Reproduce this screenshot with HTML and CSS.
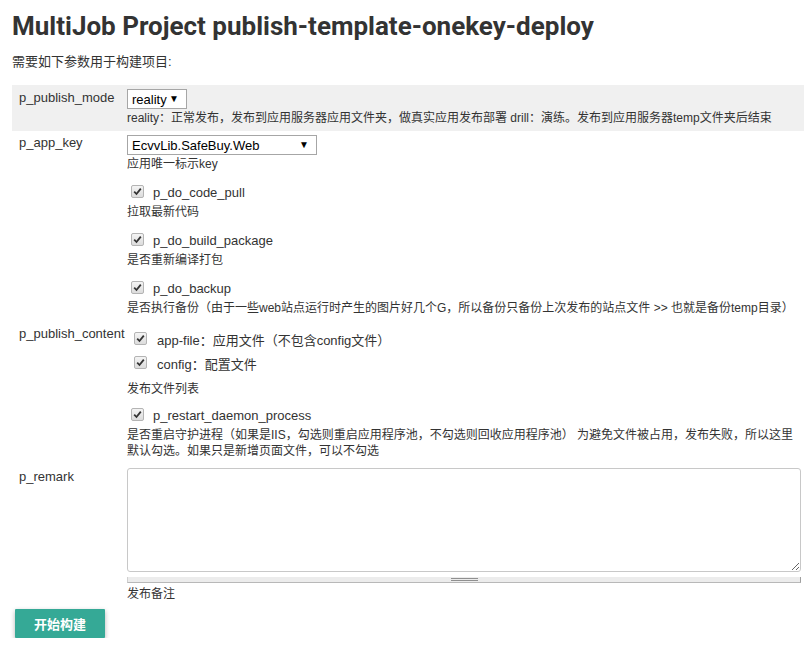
FILE: index.html
```html
<!DOCTYPE html>
<html lang="zh-CN">
<head>
    <meta charset="UTF-8">
    <meta name="viewport" content="width=device-width, initial-scale=1.0">
    <title>MultiJob Project publish-template-onekey-deploy</title>
    <link rel="stylesheet" href="styles.css">
</head>
<body>
    <div class="page">
        <!-- Header -->
        <h1 class="job-title">MultiJob Project publish-template-onekey-deploy</h1>
        <p class="intro">需要如下参数用于构建项目:</p>

        <!-- Build Parameters -->
        <table class="params">
            <tr class="row-shaded">
                <td class="param-name pad-first">p_publish_mode</td>
                <td class="param-value pad-select-first">
                    <span class="select-wrap select-short">
                        <select class="param-select">
                            <option>reality</option>
                            <option>drill</option>
                        </select>
                    </span>
                    <div class="desc desc-select">reality：正常发布，发布到应用服务器应用文件夹，做真实应用发布部署 drill：演练。发布到应用服务器temp文件夹后结束</div>
                </td>
            </tr>
            <tr>
                <td class="param-name pad-select">p_app_key</td>
                <td class="param-value pad-select">
                    <span class="select-wrap select-long">
                        <select class="param-select">
                            <option>EcvvLib.SafeBuy.Web</option>
                        </select>
                    </span>
                    <div class="desc desc-select">应用唯一标示key</div>
                </td>
            </tr>
            <tr>
                <td class="param-name"></td>
                <td class="param-value pad-bool">
                    <div class="check-line">
                        <span class="cb"><svg width="9" height="9" viewBox="0 0 9 9"><path d="M1.2 4.6 L3.5 7 L7.8 1.6" fill="none" stroke="#333" stroke-width="1.8"/></svg></span>
                        <span>p_do_code_pull</span>
                    </div>
                    <div class="desc">拉取最新代码</div>
                </td>
            </tr>
            <tr>
                <td class="param-name"></td>
                <td class="param-value pad-bool">
                    <div class="check-line">
                        <span class="cb"><svg width="9" height="9" viewBox="0 0 9 9"><path d="M1.2 4.6 L3.5 7 L7.8 1.6" fill="none" stroke="#333" stroke-width="1.8"/></svg></span>
                        <span>p_do_build_package</span>
                    </div>
                    <div class="desc">是否重新编译打包</div>
                </td>
            </tr>
            <tr>
                <td class="param-name"></td>
                <td class="param-value pad-bool">
                    <div class="check-line">
                        <span class="cb"><svg width="9" height="9" viewBox="0 0 9 9"><path d="M1.2 4.6 L3.5 7 L7.8 1.6" fill="none" stroke="#333" stroke-width="1.8"/></svg></span>
                        <span>p_do_backup</span>
                    </div>
                    <div class="desc">是否执行备份（由于一些web站点运行时产生的图片好几个G，所以备份只备份上次发布的站点文件 &gt;&gt; 也就是备份temp目录）</div>
                </td>
            </tr>
            <tr>
                <td class="param-name pad-multi-label">p_publish_content</td>
                <td class="param-value pad-multi">
                    <div class="check-line check-multi">
                        <span class="cb"><svg width="9" height="9" viewBox="0 0 9 9"><path d="M1.2 4.6 L3.5 7 L7.8 1.6" fill="none" stroke="#333" stroke-width="1.8"/></svg></span>
                        <span>app-file：应用文件（不包含config文件）</span>
                    </div>
                    <div class="check-line check-multi">
                        <span class="cb"><svg width="9" height="9" viewBox="0 0 9 9"><path d="M1.2 4.6 L3.5 7 L7.8 1.6" fill="none" stroke="#333" stroke-width="1.8"/></svg></span>
                        <span>config：配置文件</span>
                    </div>
                    <div class="desc desc-multi">发布文件列表</div>
                </td>
            </tr>
            <tr>
                <td class="param-name"></td>
                <td class="param-value pad-bool-after">
                    <div class="check-line">
                        <span class="cb"><svg width="9" height="9" viewBox="0 0 9 9"><path d="M1.2 4.6 L3.5 7 L7.8 1.6" fill="none" stroke="#333" stroke-width="1.8"/></svg></span>
                        <span>p_restart_daemon_process</span>
                    </div>
                    <div class="desc">是否重启守护进程（如果是IIS，勾选则重启应用程序池，不勾选则回收应用程序池） 为避免文件被占用，发布失败，所以这里默认勾选。如果只是新增页面文件，可以不勾选</div>
                </td>
            </tr>
            <tr>
                <td class="param-name pad-text-label">p_remark</td>
                <td class="param-value pad-text">
                    <textarea class="remark"></textarea>
                    <div class="resize-bar"><span class="grip"></span></div>
                    <div class="desc desc-remark">发布备注</div>
                </td>
            </tr>
        </table>

        <button class="build-btn">开始构建</button>
    </div>
</body>
</html>
```

FILE: styles.css
```css
/* Basic Styling */
body {
    margin: 0;
    padding: 0;
    background-color: #fff;
    color: #333;
    font-family: "Liberation Sans", Arial, "Noto Sans CJK SC", sans-serif;
    font-size: 13px;
}
.page {
    padding-left: 12px;
}
/* Header */
.job-title {
    margin: 10px 0 0;
    font-family: Roboto, "Liberation Sans", sans-serif;
    font-size: 26px;
    line-height: 32px;
    font-weight: bold;
    color: #333;
}
.intro {
    margin: 12px 0 15px;
    line-height: 16px;
}
/* Parameters Table */
.params {
    width: 792px;
    border-collapse: collapse;
    border-spacing: 0;
}
.params td {
    vertical-align: top;
    padding: 0;
}
.row-shaded { background-color: #f0f0f0; }
.param-name {
    width: 108px;
    padding-left: 7px !important;
    line-height: 16px;
    white-space: nowrap;
}
.param-value { padding-right: 3px !important; }
.pad-first { padding-top: 5px !important; }
.pad-select-first { padding-top: 4px !important; padding-bottom: 5px !important; }
.pad-select { padding-top: 4px !important; }
.pad-bool { padding-top: 8px !important; }
.pad-bool-after { padding-top: 6px !important; }
.pad-multi-label { padding-top: 10px !important; }
.pad-multi { padding-top: 11px !important; }
.pad-text { padding-top: 9px !important; }
.pad-text-label { padding-top: 10px !important; }
/* Select Boxes */
.select-wrap {
    position: relative;
    display: inline-block;
    vertical-align: top;
}
.select-wrap::after {
    content: "\25BC";
    position: absolute;
    top: 4px;
    right: 8px;
    font-size: 10px;
    line-height: 12px;
    color: #000;
    pointer-events: none;
}
.param-select {
    appearance: none;
    -webkit-appearance: none;
    display: block;
    height: 20px;
    margin: 0;
    padding: 0 0 0 4px;
    border: 1px solid #a6a6a6;
    border-radius: 0;
    background-color: #fff;
    color: #000;
    font-family: "Liberation Sans", Arial, sans-serif;
    font-size: 13px;
}
.select-short .param-select { width: 60px; }
.select-long .param-select { width: 190px; }
/* Checkboxes */
.check-line {
    display: flex;
    align-items: center;
    height: 24px;
    font-size: 13px;
}
.cb {
    display: inline-flex;
    align-items: center;
    justify-content: center;
    box-sizing: border-box;
    width: 13px;
    height: 13px;
    margin: -2px 9px 0 4px;
    border: 1px solid #b4b4b4;
    border-radius: 2px;
    background: linear-gradient(#f4f4f4, #dcdcdc);
}
.check-multi .cb { margin-left: 7px; margin-right: 10px; }
/* Descriptions */
.desc {
    font-size: 12px;
    line-height: 16px;
    color: #333;
}
.desc-select { margin-top: 1px; }
.desc-multi { margin-top: 6px; }
.desc-remark { margin-top: 3px; }
/* Remark */
.remark {
    display: block;
    box-sizing: border-box;
    width: 674px;
    height: 104px;
    margin: 0;
    border: 1px solid #c8c8c8;
    border-radius: 3px;
    font-family: inherit;
    font-size: 13px;
}
.resize-bar {
    display: flex;
    justify-content: center;
    box-sizing: border-box;
    width: 674px;
    height: 6px;
    margin-top: 5px;
    background-color: #ececec;
    border-bottom: 1px solid #b8b8b8;
    border-right: 1px solid #a0a0a0;
    border-left: 1px solid #d0d0d0;
}
.grip {
    width: 27px;
    height: 1px;
    margin-top: 1px;
    border-top: 1px solid #909090;
    border-bottom: 1px solid #909090;
}
/* Build Button */
.build-btn {
    display: block;
    width: 90px;
    height: 29px;
    margin: 7px 0 0 3px;
    padding: 0;
    border: none;
    border-radius: 1px;
    background-color: #35a996;
    color: #fff;
    font-family: "Noto Sans CJK SC", sans-serif;
    font-size: 13px;
    font-weight: bold;
    box-shadow: 0 2px 5px rgba(0, 0, 0, 0.3);
    cursor: pointer;
}
```
